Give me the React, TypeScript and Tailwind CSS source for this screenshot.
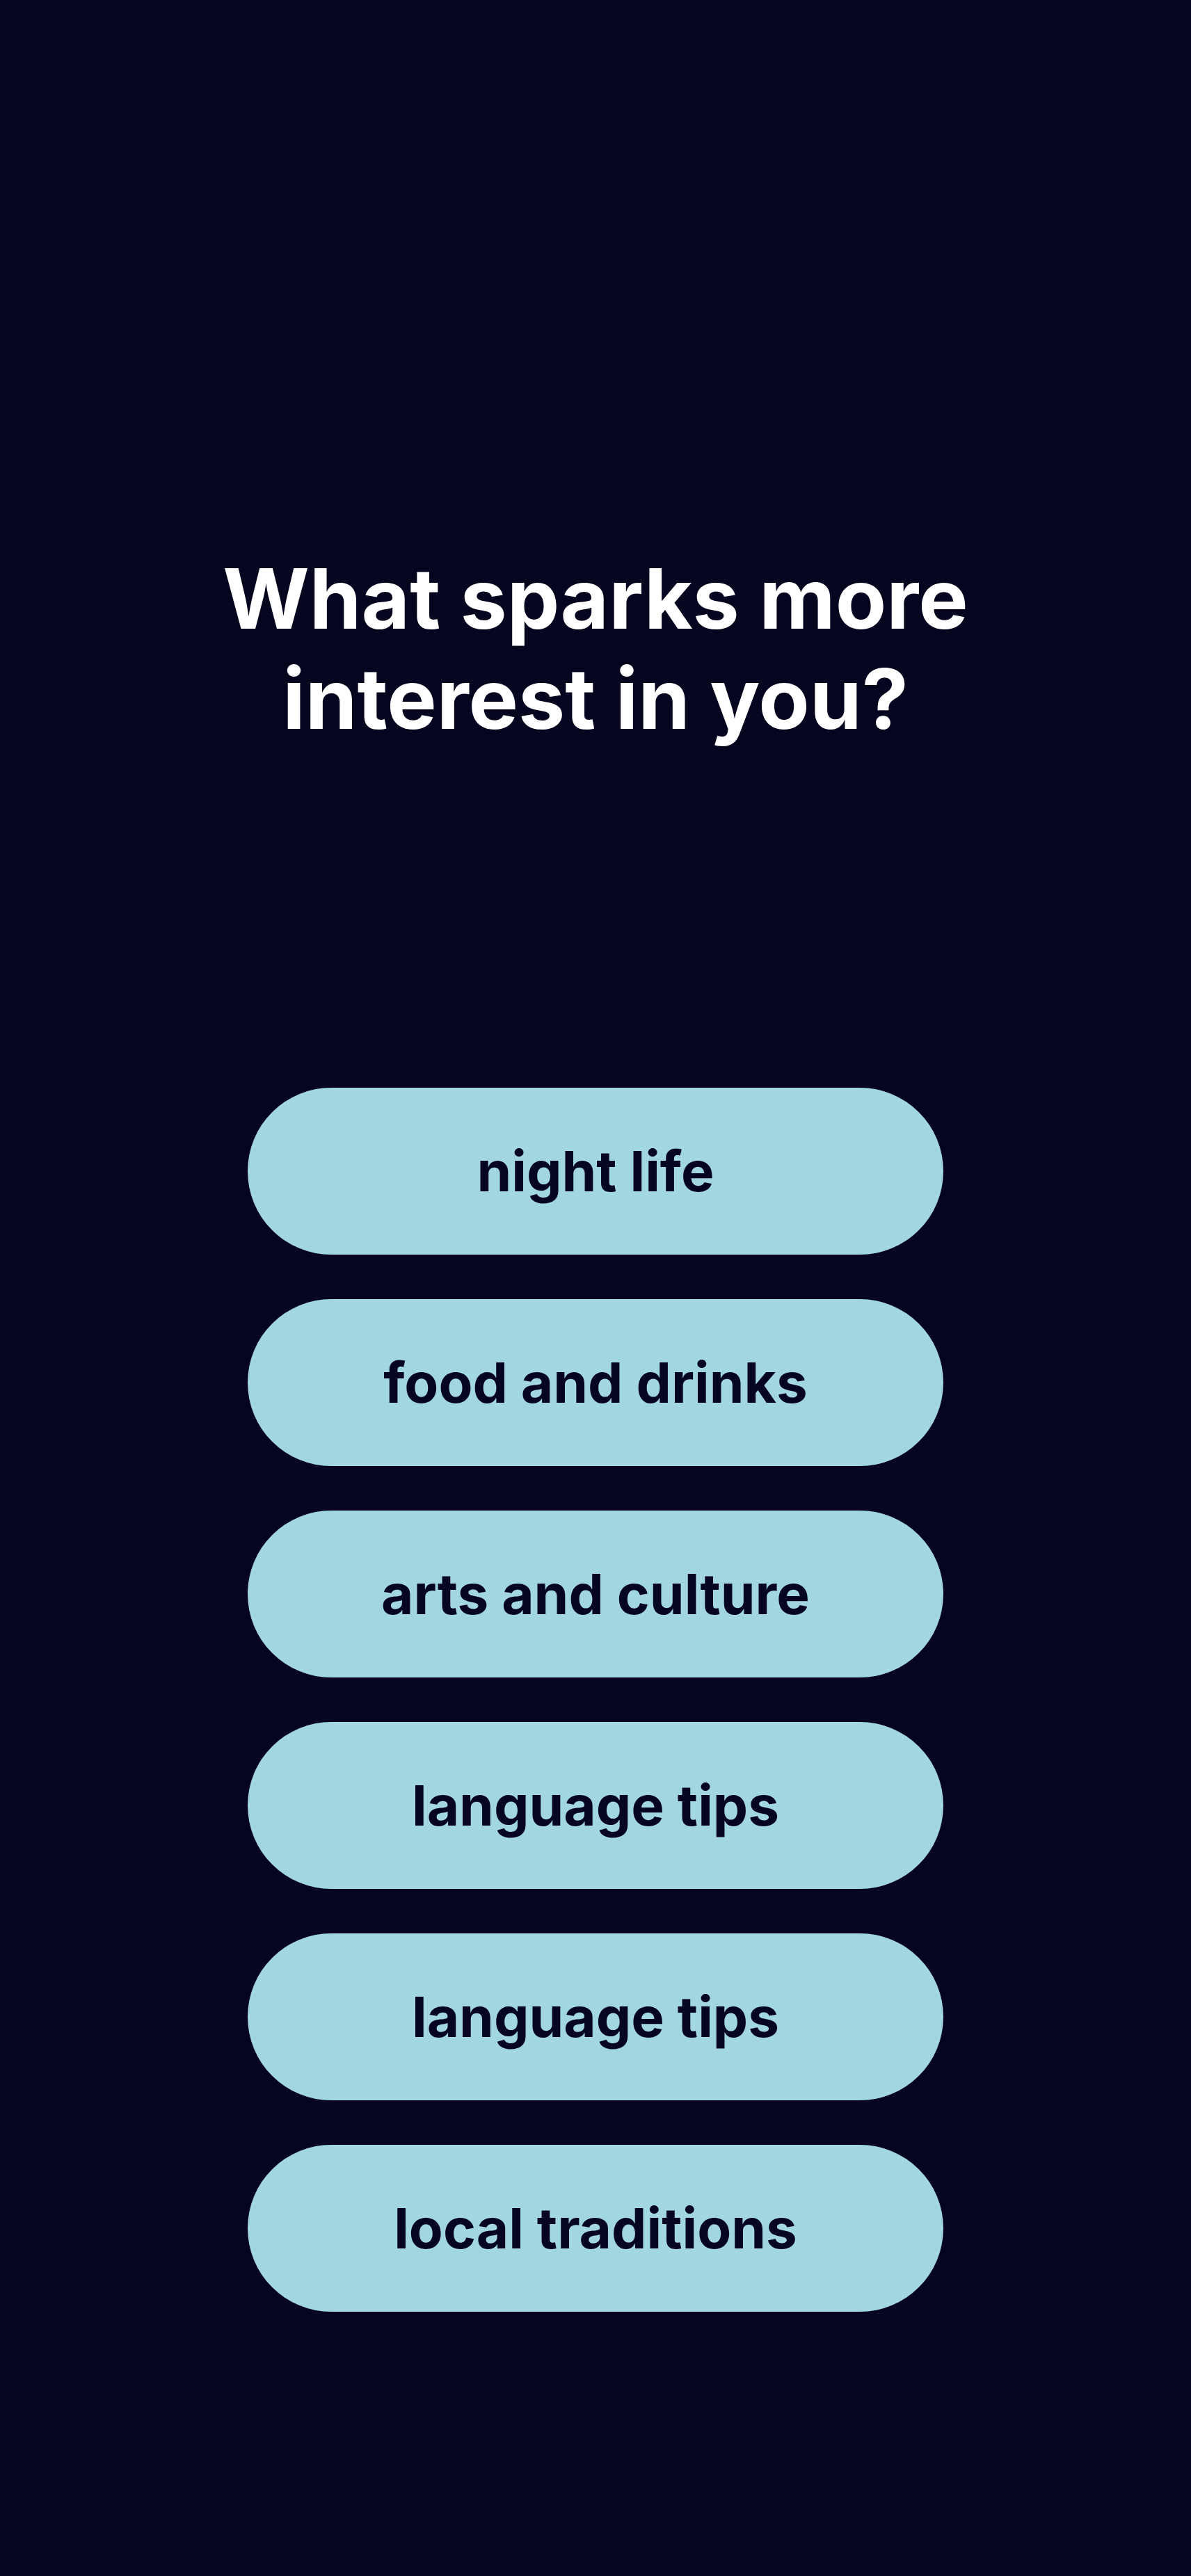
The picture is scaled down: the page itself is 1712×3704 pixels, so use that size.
const options = [
  "night life",
  "food and drinks",
  "arts and culture",
  "language tips",
  "language tips",
  "local traditions",
];

export default function App() {
  return (
    <div
      className="flex min-h-[3704px] w-full flex-col items-center bg-[#05051f] pt-[789px]"
      style={{ fontFamily: "Inter, 'Noto Sans', sans-serif" }}
    >
      <h1 className="text-center text-[120px] font-bold leading-[144px] text-white">
        What sparks more
        <br />
        interest in you?
      </h1>
      <div className="mt-[487px] flex w-[1000px] flex-col gap-[64px]">
        {options.map((label, i) => (
          <button
            key={i}
            type="button"
            className="flex h-[240px] w-full items-center justify-center rounded-full bg-[#a3d7e0] text-[80px] font-bold text-[#05051f]"
          >
            {label}
          </button>
        ))}
      </div>
    </div>
  );
}
